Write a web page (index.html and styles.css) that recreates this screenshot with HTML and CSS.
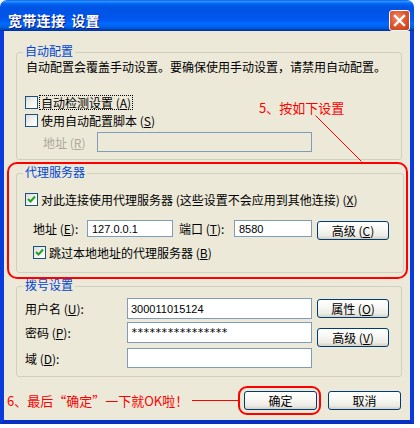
FILE: index.html
```html
<!DOCTYPE html>
<html lang="zh-CN">
<head>
<meta charset="utf-8">
<link rel="stylesheet" href="styles.css">
</head>
<body>
<div class="dialog">
  <div class="titlebar">
    <span class="title">宽带连接<span class="gap"></span>设置</span>
    <span class="close"><svg width="13" height="13" viewBox="0 0 13 13"><path d="M2 2 L11 11 M11 2 L2 11" stroke="#fff" stroke-width="2.4" stroke-linecap="square"/></svg></span>
  </div>
  <div class="body">
    <fieldset class="group g-auto">
      <legend>自动配置</legend>
      <p class="desc">自动配置会覆盖手动设置。要确保使用手动设置，请禁用自动配置。</p>
      <div class="cbrow r-first"><span class="cb"></span><span class="focus">自动检测设置 (<u>A</u>)</span></div>
      <div class="cbrow"><span class="cb"></span><span>使用自动配置脚本 (<u>S</u>)</span></div>
      <div class="script-row"><span class="lbl-r">地址 (<u>R</u>)</span><span class="input off"></span></div>
    </fieldset>
    <div class="mark">
      <fieldset class="group g-proxy">
        <legend>代理服务器</legend>
        <div class="cbrow r-proxy"><span class="cb on"><svg width="9" height="9" viewBox="0 0 9 9"><path d="M1 4 L3.5 6.5 L8 1.5" stroke="#21a121" stroke-width="2" fill="none"/></svg></span><span>对此连接使用代理服务器 (这些设置不会应用到其他连接) (<u>X</u>)</span></div>
        <div class="proxy-row">
          <span class="lbl-e">地址 (<u>E</u>):</span>
          <span class="input host">127.0.0.1</span>
          <span class="lbl-t">端口 (<u>T</u>):</span>
          <span class="input port">8580</span>
          <span class="btn b-adv">高级 (<u>C</u>)</span>
        </div>
        <div class="cbrow r-bypass"><span class="cb on"><svg width="9" height="9" viewBox="0 0 9 9"><path d="M1 4 L3.5 6.5 L8 1.5" stroke="#21a121" stroke-width="2" fill="none"/></svg></span><span>跳过本地地址的代理服务器 (<u>B</u>)</span></div>
      </fieldset>
    </div>
    <fieldset class="group g-dial">
      <legend>拨号设置</legend>
      <div class="dial-row d1"><span class="lbl-d">用户名 (<u>U</u>):</span><span class="input dial">300011015124</span><span class="btn b1">属性 (<u>O</u>)</span></div>
      <div class="dial-row d2"><span class="lbl-d">密码 (<u>P</u>):</span><span class="input dial pw">****************</span><span class="btn b2">高级 (<u>V</u>)</span></div>
      <div class="dial-row d3"><span class="lbl-d">域 (<u>D</u>):</span><span class="input dial short"></span></div>
    </fieldset>
    <div class="footer">
      <span class="note6">6、最后“确定”一下就OK啦！</span>
      <span class="rule"></span>
      <span class="ring"><span class="btn ok">确定</span></span>
      <span class="btn cancel">取消</span>
    </div>
  </div>
  <div class="note5">5、按如下设置</div>
  <svg class="pointer" width="50" height="50" viewBox="0 0 50 50"><line x1="0.5" y1="0.5" x2="46.5" y2="46.5" stroke="#ff0000" stroke-width="1"/></svg>
</div>
</body>
</html>
```

FILE: styles.css
```css
html, body {
  margin: 0;
  padding: 0;
  background: #ffffff;
}
body {
  font-family: "Noto Sans CJK SC", "Liberation Sans", sans-serif;
  font-size: 12px;
  color: #000;
}
.dialog {
  position: relative;
  width: 414px;
}
.titlebar {
  height: 31px;
  display: flex;
  align-items: flex-start;
  border-radius: 7px 7px 0 0;
  background: linear-gradient(to bottom, #0058ee 0%, #3593ff 4%, #288eff 6%, #127dff 8%, #036ffc 10%, #0262ee 14%, #0057e5 20%, #0054e3 24%, #0055eb 56%, #005bf5 66%, #026afe 76%, #0062ef 86%, #0052d6 92%, #0040ab 96%, #003092 100%);
}
.title {
  margin: 12px 0 0 8px;
  line-height: 16px;
  font-size: 14px;
  font-weight: bold;
  color: #fff;
  letter-spacing: 0.3px;
  text-shadow: 1px 1px 0 #0a1883;
}
.gap {
  display: inline-block;
  width: 6px;
}
.close {
  margin: 10px 4px 0 auto;
  width: 21px;
  height: 21px;
  box-sizing: border-box;
  border: 1px solid #fff;
  border-radius: 3px;
  background: radial-gradient(circle at 40% 35%, #f08a6a 0%, #e2582f 45%, #c33a16 100%);
  display: flex;
  align-items: center;
  justify-content: center;
}
.body {
  box-sizing: border-box;
  width: 414px;
  background: #ece9d8;
  border: 4px solid #0a3cdc;
  border-top: 0;
  border-bottom-color: #0630c0;
  padding: 13px 0 5px 0;
}
.group {
  margin: 0 8px 0 12px;
  padding: 0 8px 8px 8px;
  border: 1px solid #d0d0bf;
  border-radius: 3px;
  min-width: 0;
}
.group legend {
  margin-left: -2px;
  padding: 0 2px 2px 2px;
  line-height: 14px;
  color: #0046d5;
}
.desc {
  margin: 0 0 0 1px;
  line-height: 14px;
  white-space: nowrap;
}
.cbrow {
  height: 18px;
  display: flex;
  align-items: center;
  gap: 3px;
  white-space: nowrap;
}
.r-first { margin-top: 19px; }
.cb {
  width: 13px;
  height: 13px;
  box-sizing: border-box;
  border: 1px solid #1c5180;
  background: linear-gradient(135deg, #dcdcd7 0%, #f6f6f3 60%, #ffffff 100%);
  display: flex;
  align-items: center;
  justify-content: center;
}
.focus {
  outline: 1px dotted #000;
  outline-offset: 0;
  padding: 0 1px;
  margin-left: -1px;
  line-height: 13px;
}
.script-row {
  margin-top: 3px;
  padding-left: 18px;
  display: flex;
  align-items: center;
}
.lbl-r {
  width: 54px;
  color: #aca899;
}
.input {
  box-sizing: border-box;
  border: 1px solid #7f9db9;
  background: #fff;
  font-family: "Liberation Sans", sans-serif;
  font-size: 11px;
  padding-left: 4px;
  display: flex;
  align-items: center;
  white-space: nowrap;
}
.input.off {
  width: 215px;
  height: 20px;
  background: #ece9d8;
}
.g-auto { padding-bottom: 7px; }
.mark {
  margin: 2px 2px 0 3px;
  border: 2px solid #ff0000;
  border-radius: 10px;
  padding: 1px 2px 4px 7px;
}
.g-proxy {
  margin: 0;
  padding-bottom: 11px;
}
.r-proxy { margin-top: 9px; }
.proxy-row {
  margin-top: 12px;
  padding-left: 8px;
  display: flex;
  align-items: flex-start;
}
.lbl-e { width: 54px; line-height: 17px; white-space: nowrap; }
.lbl-t { width: 55px; margin-left: 6px; line-height: 17px; white-space: nowrap; }
.input.host { width: 86px; height: 17px; }
.input.port { width: 78px; height: 17px; }
.btn {
  box-sizing: border-box;
  width: 72px;
  height: 19px;
  border: 1px solid #003c74;
  border-radius: 3px;
  background: linear-gradient(to bottom, #ffffff 0%, #f7f7f3 45%, #ecebe4 80%, #d6d0c5 100%);
  display: flex;
  align-items: center;
  justify-content: center;
  white-space: nowrap;
}
.b-adv { margin: 1px 0 0 5px; }
.r-bypass {
  margin-top: 3px;
  padding-left: 8px;
}
.g-dial {
  margin-top: -1px;
  padding-bottom: 8px;
}
.dial-row {
  display: flex;
  align-items: flex-start;
}
.d1 { margin-top: 4px; }
.d2 { margin-top: 3px; }
.d3 { margin-top: 1px; }
.lbl-d {
  width: 102px;
  align-self: center;
}
.d2 .lbl-d { align-self: flex-start; line-height: 21px; }
.input.dial {
  width: 185px;
  height: 21px;
  padding-left: 3px;
}
.input.pw {
  font-family: "DejaVu Sans Mono", monospace;
  font-size: 11px;
  letter-spacing: -0.6px;
}
.input.short { height: 20px; }
.b1 { margin: 1px 0 0 5px; }
.b2 { margin: 6px 0 0 5px; }
.footer {
  margin-top: 9px;
  padding-left: 3px;
  display: flex;
  align-items: center;
}
.note6 {
  color: #ff0000;
  font-size: 13px;
  line-height: 16px;
  white-space: nowrap;
}
.rule {
  flex: 1;
  height: 1px;
  margin-left: 4px;
  background: #ff0000;
}
.ring {
  border: 2px solid #ff0000;
  border-radius: 9px;
  padding: 3px 2px 3px 4px;
}
.btn.ok {
  width: 73px;
}
.btn.cancel {
  margin: 0 9px 0 7px;
  width: 73px;
}
.note5 {
  position: absolute;
  left: 259px;
  top: 100px;
  color: #ff0000;
  font-size: 13px;
  line-height: 16px;
  white-space: nowrap;
}
.pointer {
  position: absolute;
  left: 315px;
  top: 115px;
}
```
